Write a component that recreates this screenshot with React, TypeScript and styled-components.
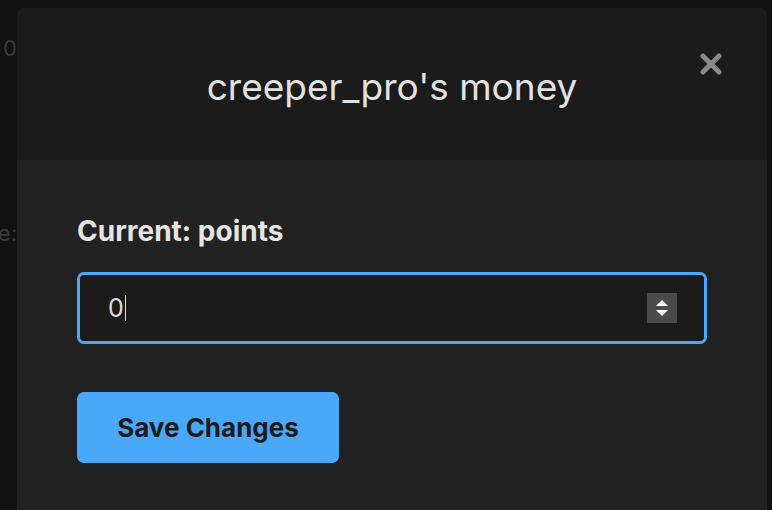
import React, { FC } from "react";
import styled, { createGlobalStyle } from "styled-components";

const GlobalStyle = createGlobalStyle`
  html, body {
    margin: 0;
    padding: 0;
    background: #121212;
    font-family: Inter, "Noto Sans", "Liberation Sans", sans-serif;
  }
  #root {
    width: 772px;
    height: 510px;
    overflow: hidden;
  }
`;

const Page = styled.div`
  position: relative;
  width: 772px;
  height: 510px;
  overflow: hidden;
  background: #121212;
`;

const BackStrip = styled.div`
  width: 17px;
  height: 100%;
  overflow: hidden;
  display: flex;
  flex-direction: column;
  align-items: flex-end;
  padding-top: 33px;
  gap: 155px;
`;

const BackText = styled.span`
  white-space: nowrap;
  font-size: 22px;
  line-height: 30px;
  color: #3a3a3a;
`;

const Modal = styled.div`
  position: absolute;
  left: 17px;
  top: 8px;
  width: 750px;
  height: 520px;
  border-radius: 8px 8px 0 0;
  overflow: hidden;
  display: flex;
  flex-direction: column;
  background: #222222;
`;

const Header = styled.div`
  position: relative;
  height: 152px;
  box-sizing: border-box;
  padding-top: 4px;
  background: #1b1b1b;
  display: flex;
  align-items: center;
  justify-content: center;
`;

const Title = styled.h2`
  margin: 0;
  font-size: 37px;
  font-weight: 400;
  color: #e2e2e2;
`;

const CloseButton = styled.button`
  position: absolute;
  top: 45px;
  right: 45px;
  width: 22px;
  height: 22px;
  padding: 0;
  border: none;
  background: none;
  cursor: pointer;
  display: flex;
`;

const Body = styled.div`
  padding: 56px 60px 0 60px;
  display: flex;
  flex-direction: column;
`;

const Label = styled.label`
  font-size: 28px;
  line-height: 30px;
  font-weight: 700;
  color: #e4e4e4;
  margin-bottom: 26px;
`;

const InputBox = styled.div`
  height: 72px;
  box-sizing: border-box;
  border: 3px solid #4aa8f8;
  border-radius: 7px;
  background: #1b1b1b;
  display: flex;
  align-items: center;
  padding: 0 27px 0 28px;
`;

const Value = styled.span`
  font-size: 25px;
  color: #dcdcdc;
`;

const Caret = styled.span`
  width: 1px;
  height: 26px;
  background: #e0e0e0;
  margin-left: 1px;
`;

const Spinner = styled.div`
  margin-left: auto;
  width: 30px;
  height: 30px;
  background: #4a4a4a;
  display: flex;
  align-items: center;
  justify-content: center;
`;

const SaveButton = styled.button`
  margin-top: 48px;
  width: 262px;
  height: 71px;
  border: none;
  border-radius: 7px;
  background: #4aa8fa;
  color: #1c1c1c;
  font-family: inherit;
  font-size: 26px;
  font-weight: 700;
  cursor: pointer;
`;

const App: FC = () => {
  return (
    <Page>
      <GlobalStyle />
      <BackStrip>
        <BackText>0</BackText>
        <BackText>Balance:</BackText>
      </BackStrip>
      <Modal>
        <Header>
          <Title>creeper_pro's money</Title>
          <CloseButton aria-label="Close">
            <svg width="22" height="22" viewBox="0 0 22 22">
              <path
                d="M3 3L19 19M19 3L3 19"
                stroke="#8a8a8a"
                strokeWidth="5"
                strokeLinecap="round"
              />
            </svg>
          </CloseButton>
        </Header>
        <Body>
          <Label>Current: points</Label>
          <InputBox>
            <Value>0</Value>
            <Caret />
            <Spinner>
              <svg width="14" height="22" viewBox="0 0 14 22">
                <polygon points="7,3 13,9 1,9" fill="#ffffff" />
                <polygon points="1,13 13,13 7,19" fill="#ffffff" />
              </svg>
            </Spinner>
          </InputBox>
          <SaveButton>Save Changes</SaveButton>
        </Body>
      </Modal>
    </Page>
  );
};

export default App;
